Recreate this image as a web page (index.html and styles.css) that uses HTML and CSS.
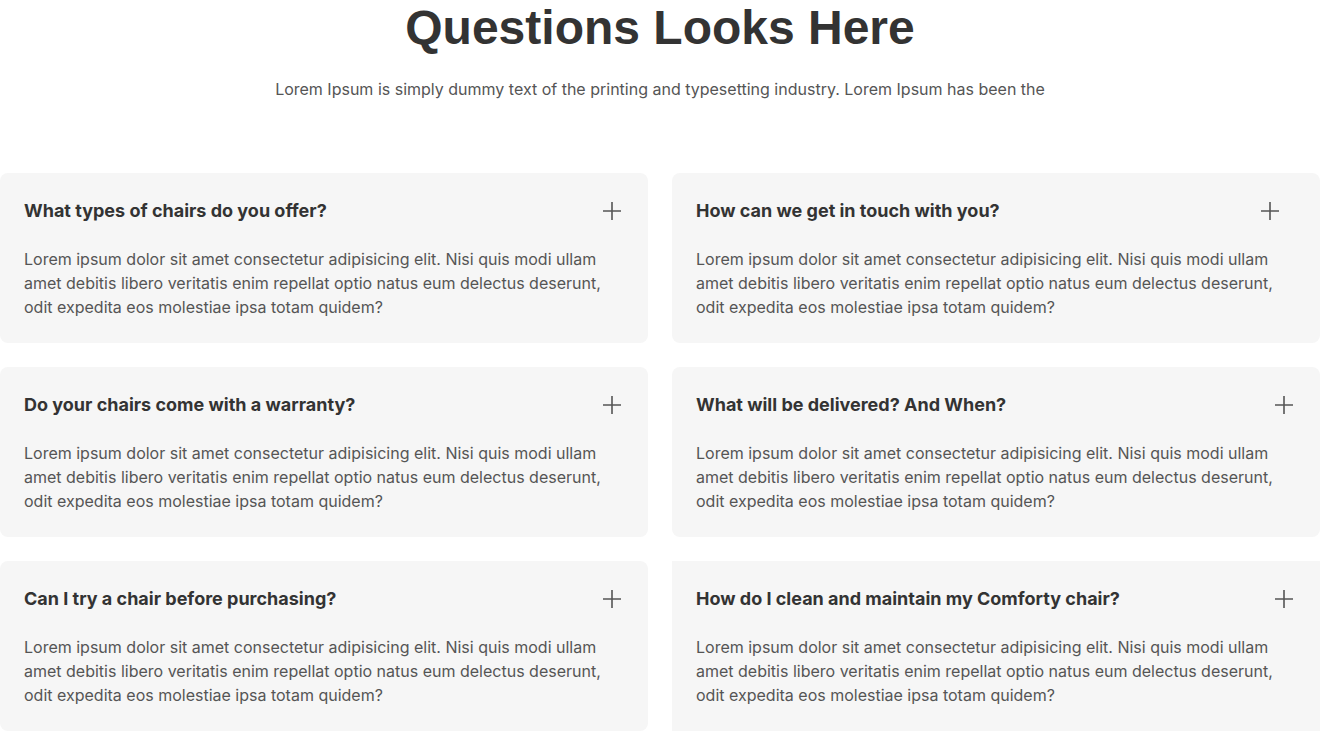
FILE: index.html
```html
<!DOCTYPE html>
<html lang="en">
<head>
<meta charset="utf-8">
<title>FAQ</title>
<link rel="stylesheet" href="styles.css">
</head>
<body>
<section class="faq">
  <header class="faq-head">
    <h1 class="faq-title">Questions Looks Here</h1>
    <p class="faq-sub">Lorem Ipsum is simply dummy text of the printing and typesetting industry. Lorem Ipsum has been the</p>
  </header>
  <div class="faq-grid">
    <article class="card">
      <div class="card-top">
        <h3 class="card-q">What types of chairs do you offer?</h3>
        <svg class="plus" viewBox="0 0 20 20" width="20" height="20"><path d="M10 1v18M1 10h18"/></svg>
      </div>
      <p class="card-a">Lorem ipsum dolor sit amet consectetur adipisicing elit. Nisi quis modi ullam amet debitis libero veritatis enim repellat optio natus eum delectus deserunt, odit expedita eos molestiae ipsa totam quidem?</p>
    </article>
    <article class="card">
      <div class="card-top card-top--inset">
        <h3 class="card-q">How can we get in touch with you?</h3>
        <svg class="plus" viewBox="0 0 20 20" width="20" height="20"><path d="M10 1v18M1 10h18"/></svg>
      </div>
      <p class="card-a">Lorem ipsum dolor sit amet consectetur adipisicing elit. Nisi quis modi ullam amet debitis libero veritatis enim repellat optio natus eum delectus deserunt, odit expedita eos molestiae ipsa totam quidem?</p>
    </article>
    <article class="card">
      <div class="card-top">
        <h3 class="card-q">Do your chairs come with a warranty?</h3>
        <svg class="plus" viewBox="0 0 20 20" width="20" height="20"><path d="M10 1v18M1 10h18"/></svg>
      </div>
      <p class="card-a">Lorem ipsum dolor sit amet consectetur adipisicing elit. Nisi quis modi ullam amet debitis libero veritatis enim repellat optio natus eum delectus deserunt, odit expedita eos molestiae ipsa totam quidem?</p>
    </article>
    <article class="card">
      <div class="card-top">
        <h3 class="card-q">What will be delivered? And When?</h3>
        <svg class="plus" viewBox="0 0 20 20" width="20" height="20"><path d="M10 1v18M1 10h18"/></svg>
      </div>
      <p class="card-a">Lorem ipsum dolor sit amet consectetur adipisicing elit. Nisi quis modi ullam amet debitis libero veritatis enim repellat optio natus eum delectus deserunt, odit expedita eos molestiae ipsa totam quidem?</p>
    </article>
    <article class="card">
      <div class="card-top">
        <h3 class="card-q">Can I try a chair before purchasing?</h3>
        <svg class="plus" viewBox="0 0 20 20" width="20" height="20"><path d="M10 1v18M1 10h18"/></svg>
      </div>
      <p class="card-a">Lorem ipsum dolor sit amet consectetur adipisicing elit. Nisi quis modi ullam amet debitis libero veritatis enim repellat optio natus eum delectus deserunt, odit expedita eos molestiae ipsa totam quidem?</p>
    </article>
    <article class="card card--square">
      <div class="card-top">
        <h3 class="card-q">How do I clean and maintain my Comforty chair?</h3>
        <svg class="plus" viewBox="0 0 20 20" width="20" height="20"><path d="M10 1v18M1 10h18"/></svg>
      </div>
      <p class="card-a">Lorem ipsum dolor sit amet consectetur adipisicing elit. Nisi quis modi ullam amet debitis libero veritatis enim repellat optio natus eum delectus deserunt, odit expedita eos molestiae ipsa totam quidem?</p>
    </article>
  </div>
</section>
</body>
</html>
```

FILE: styles.css
```css
* { box-sizing: border-box; }
html, body { margin: 0; padding: 0; background: #ffffff; }
body {
  font-family: Inter, "Noto Sans", sans-serif;
  color: #333333;
}
.faq { padding-top: 0; }
.faq-head { text-align: center; }
.faq-title {
  margin: 0;
  font-family: "Liberation Sans", Arial, sans-serif;
  font-weight: 700;
  font-size: 48px;
  line-height: 55px;
  color: #333333;
}
.faq-sub {
  margin: 22px 0 0;
  font-size: 16px;
  line-height: 24px;
  color: #555555;
}
.faq-grid {
  margin-top: 72px;
  display: grid;
  grid-template-columns: 1fr 1fr;
  gap: 24px;
}
.card {
  background: #f6f6f6;
  border-radius: 8px;
  padding: 24px;
  min-height: 170px;
}
.card--square { border-radius: 0; }
.card-top {
  display: flex;
  align-items: center;
  justify-content: space-between;
  padding-top: 1px;
  padding-right: 2px;
}
.card-top--inset { padding-right: 16px; }
.card-q {
  margin: 0;
  font-size: 18px;
  line-height: 26px;
  font-weight: 700;
  color: #333333;
}
.plus {
  width: 20px;
  height: 20px;
  stroke: #555555;
  stroke-width: 1.6;
  fill: none;
  flex: none;
}
.card-a {
  margin: 23px 0 0;
  font-size: 16px;
  line-height: 24px;
  color: #555555;
}
```
